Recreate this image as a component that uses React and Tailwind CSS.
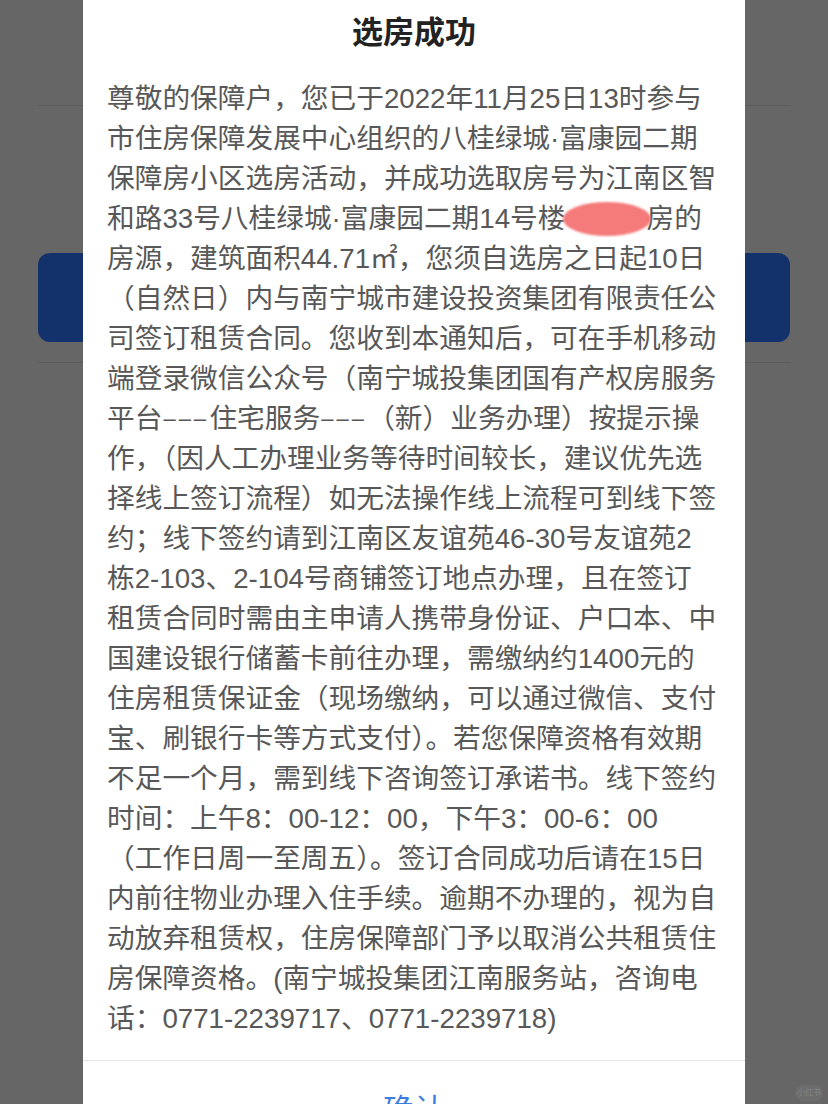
import React from "react";

const lines = [
  "尊敬的保障户，您已于2022年11月25日13时参与",
  "市住房保障发展中心组织的八桂绿城·富康园二期",
  "保障房小区选房活动，并成功选取房号为江南区智",
  "BLOB",
  "房源，建筑面积44.71㎡，您须自选房之日起10日",
  "（自然日）内与南宁城市建设投资集团有限责任公",
  "司签订租赁合同。您收到本通知后，可在手机移动",
  "端登录微信公众号（南宁城投集团国有产权房服务",
  "DASH",
  "作，（因人工办理业务等待时间较长，建议优先选",
  "择线上签订流程）如无法操作线上流程可到线下签",
  "约；线下签约请到江南区友谊苑46-30号友谊苑2",
  "栋2-103、2-104号商铺签订地点办理，且在签订",
  "租赁合同时需由主申请人携带身份证、户口本、中",
  "国建设银行储蓄卡前往办理，需缴纳约1400元的",
  "住房租赁保证金（现场缴纳，可以通过微信、支付",
  "宝、刷银行卡等方式支付）。若您保障资格有效期",
  "不足一个月，需到线下咨询签订承诺书。线下签约",
  "时间：上午8：00-12：00，下午3：00-6：00",
  "（工作日周一至周五）。签订合同成功后请在15日",
  "内前往物业办理入住手续。逾期不办理的，视为自",
  "动放弃租赁权，住房保障部门予以取消公共租赁住",
  "房保障资格。(南宁城投集团江南服务站，咨询电",
  "话：0771-2239717、0771-2239718)",
];

function Dashes() {
  return (
    <span className="relative top-[-2px] inline-block w-[47px] whitespace-nowrap pl-[1px] align-baseline text-[22px] leading-none tracking-[3px]">
      –––
    </span>
  );
}

function Line({ l }) {
  if (l === "BLOB") {
    return (
      <div className="h-[40px] whitespace-nowrap">
        和路33号八桂绿城·富康园二期14号楼
        <span className="relative inline-block h-[28px] w-[81px] align-middle">
          <span className="absolute left-[-2px] top-[-5px] h-[34px] w-[88px] rounded-[50%] bg-[#f57a7a] blur-[1px]" />
        </span>
        房的
      </div>
    );
  }
  if (l === "DASH") {
    return (
      <div className="h-[40px] whitespace-nowrap">
        平台<Dashes />住宅服务<Dashes />（新）业务办理）按提示操
      </div>
    );
  }
  return <div className="h-[40px] whitespace-nowrap">{l}</div>;
}

export default function App() {
  return (
    <div
      className="relative h-[1104px] w-[828px] overflow-hidden bg-[#666666]"
      style={{ fontFamily: '"Liberation Sans", "Noto Sans CJK SC", sans-serif' }}
    >
      {/* background page (dimmed) */}
      <div className="px-[38px]">
        <div className="h-[105px]" />
        <div className="h-px bg-[#5c5c5c]" />
        <div className="h-[147px]" />
        <div className="h-[89px] rounded-[12px] bg-[#13316b]" />
        <div className="h-[20px]" />
        <div className="h-px bg-[#5c5c5c]" />
      </div>

      {/* modal */}
      <div className="absolute left-[83px] top-0 w-[662px] bg-white">
        <div className="pt-[13px] text-center text-[31px] font-bold leading-[40px] text-[#222222]">
          选房成功
        </div>
        <div className="mt-[26px] px-[24px] pb-[21px] text-[27.7px] leading-[40px] text-[#585858]">
          {lines.map((l, i) => (
            <Line key={i} l={l} />
          ))}
        </div>
        <div className="border-t border-[#e6e6e6]" />
        <div className="flex h-[100px] items-center justify-center text-[31px] text-[#3a7de0]">
          确认
        </div>
      </div>

      {/* watermark */}
      <div className="absolute left-[795px] top-[1085px] flex h-[16px] w-[28px] items-center justify-center rounded-full bg-[#6d6d6d] text-[8px] leading-none text-[#858585]">
        小红书
      </div>
    </div>
  );
}
